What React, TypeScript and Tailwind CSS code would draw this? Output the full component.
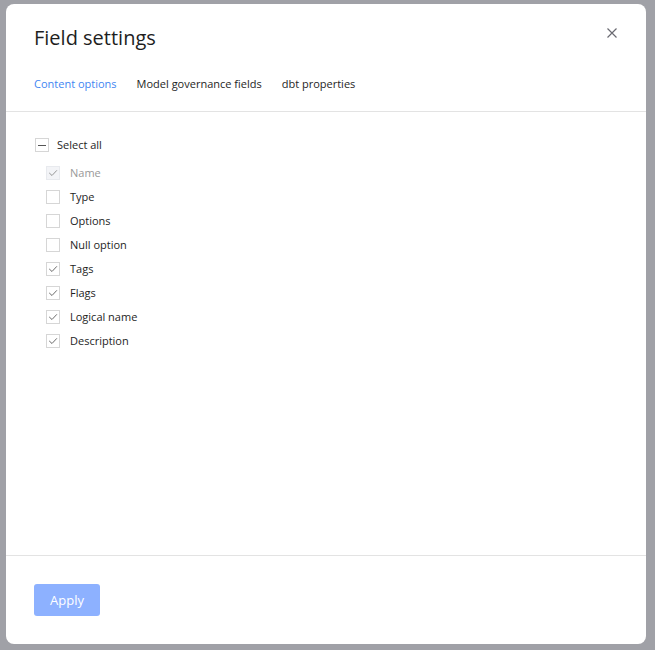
import { useState } from "react";

type Field = { label: string; checked: boolean; disabled?: boolean };

const initialFields: Field[] = [
  { label: "Name", checked: true, disabled: true },
  { label: "Type", checked: false },
  { label: "Options", checked: false },
  { label: "Null option", checked: false },
  { label: "Tags", checked: true },
  { label: "Flags", checked: true },
  { label: "Logical name", checked: true },
  { label: "Description", checked: true },
];

const tabs = ["Content options", "Model governance fields", "dbt properties"];

function Check() {
  return (
    <svg width="10" height="10" viewBox="0 0 10 10" fill="none">
      <path d="M1.5 5.2 L4 7.5 L8.6 2.6" stroke="#6b6b6b" strokeWidth="1" strokeLinecap="round" strokeLinejoin="round" />
    </svg>
  );
}

function Box({ checked, disabled, indeterminate }: { checked?: boolean; disabled?: boolean; indeterminate?: boolean }) {
  return (
    <span
      className={`flex h-[14px] w-[14px] shrink-0 items-center justify-center border ${disabled ? "border-[#dfe2e8] bg-[#eef0f4] opacity-70" : "border-[#d6d6d6] bg-white"}`}
    >
      {indeterminate && <span className="h-px w-[8px] bg-[#555]" />}
      {checked && !indeterminate && <Check />}
    </span>
  );
}

export default function App() {
  const [tab, setTab] = useState(0);
  const [fields, setFields] = useState<Field[]>(initialFields);

  function toggle(i: number) {
    setFields((f) => f.map((x, j) => (j === i && !x.disabled ? { ...x, checked: !x.checked } : x)));
  }

  return (
    <div
      className="h-[650px] w-[655px] bg-[#a0a1a7] pt-[4px] pl-[6px]"
      style={{ fontFamily: '"Open Sans", "Noto Sans", sans-serif' }}
    >
      <div className="flex h-[640px] w-[640px] flex-col rounded-[8px] bg-white">
        <div className="border-b border-[#e3e3e3]">
          <div className="flex items-start justify-between pl-[28px] pr-[28px] pt-[18px]">
            <h1 className="text-[20px] leading-[32px] text-[#1e1e1e]">Field settings</h1>
            <button className="mt-[6px] mr-[1px] text-[#666]">
              <svg width="10" height="10" viewBox="0 0 10 10">
                <path d="M0.5 0.5 L9.5 9.5 M9.5 0.5 L0.5 9.5" stroke="#6a6a72" strokeWidth="1.2" />
              </svg>
            </button>
          </div>
          <div className="mt-[22px] flex gap-[20px] pl-[28px] pb-[19px]">
            {tabs.map((t, i) => (
              <button
                key={t}
                onClick={() => setTab(i)}
                className={`text-[11px] leading-[16px] ${tab === i ? "text-[#3f86f2]" : "text-[#1e1e1e]"}`}
              >
                {t}
              </button>
            ))}
          </div>
        </div>

        <div className="flex-1 pl-[29px] pt-[26px]">
          <label className="flex h-[14px] items-center gap-[8px]">
            <Box indeterminate />
            <span className="text-[11px] text-[#1e1e1e]">Select all</span>
          </label>
          <div className="mt-[14px] flex flex-col gap-[10px] pl-[11px]">
            {fields.map((f, i) => (
              <label key={f.label} onClick={() => toggle(i)} className="flex h-[14px] items-center gap-[10px]">
                <Box checked={f.checked} disabled={f.disabled} />
                <span className={`text-[11px] ${f.disabled ? "text-[#999]" : "text-[#1e1e1e]"}`}>{f.label}</span>
              </label>
            ))}
          </div>
        </div>

        <div className="h-[89px] border-t border-[#e3e3e3] pl-[28px] pt-[28px]">
          <button className="h-[32px] w-[66px] rounded-[3px] bg-[#8db1ff] pt-[1px] text-[13px] text-white">Apply</button>
        </div>
      </div>
    </div>
  );
}
